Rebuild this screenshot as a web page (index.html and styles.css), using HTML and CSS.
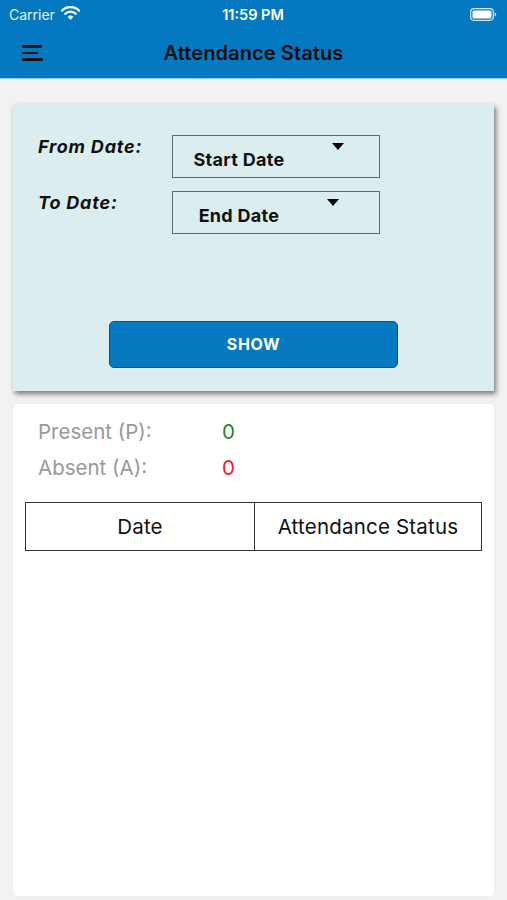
FILE: index.html
```html
<!DOCTYPE html>
<html lang="en">
<head>
    <meta charset="UTF-8">
    <meta name="viewport" content="width=device-width, initial-scale=1.0">
    <title>Attendance Status</title>
    <link rel="stylesheet" href="styles.css">
</head>
<body>
    <header class="top-bar">
        <div class="status-bar">
            <div class="carrier">
                Carrier
                <svg class="wifi" width="19" height="14" viewBox="0 0 19 14">
                    <path d="M1 4.6a12 12 0 0 1 17 0" fill="none" stroke="#fff" stroke-width="2.2" stroke-linecap="round"/>
                    <path d="M4.2 7.8a7.5 7.5 0 0 1 10.6 0" fill="none" stroke="#fff" stroke-width="2.2" stroke-linecap="round"/>
                    <path d="M7.2 10.9a3.2 3.2 0 0 1 4.6 0L9.5 13.3z" fill="#fff" stroke="#fff" stroke-width="1" stroke-linejoin="round"/>
                </svg>
            </div>
            <div class="clock">11:59 PM</div>
            <div class="battery">
                <svg width="27" height="13" viewBox="0 0 27 13">
                    <rect x="0.7" y="0.7" width="22.6" height="11.6" rx="3.2" fill="none" stroke="#cfe6f5" stroke-width="1.2"/>
                    <rect x="2.5" y="2.5" width="19" height="8" rx="1.6" fill="#fff"/>
                    <path d="M24.6 4.4c1.2.3 1.6 1 1.6 2.1s-.4 1.8-1.6 2.1z" fill="#cfe6f5"/>
                </svg>
            </div>
        </div>
        <nav class="nav-bar">
            <div class="menu-btn">
                <span></span><span></span><span></span>
            </div>
            <h1 class="nav-title">Attendance Status</h1>
            <div></div>
        </nav>
    </header>

    <main class="page">
        <section class="filter-card">
            <div class="filter-row">
                <label class="filter-label">From Date:</label>
                <div class="date-select">
                    <span class="date-text">Start Date</span>
                </div>
            </div>
            <div class="filter-row">
                <label class="filter-label">To Date:</label>
                <div class="date-select date-select-end">
                    <span class="date-text">End Date</span>
                </div>
            </div>
            <button class="show-btn">SHOW</button>
        </section>

        <section class="result-card">
            <div class="count-row">
                <span class="count-label">Present (P):</span>
                <span class="count-value present">0</span>
            </div>
            <div class="count-row">
                <span class="count-label">Absent (A):</span>
                <span class="count-value absent">0</span>
            </div>
            <table class="att-table">
                <tr>
                    <th>Date</th>
                    <th>Attendance Status</th>
                </tr>
            </table>
        </section>
    </main>
</body>
</html>
```

FILE: styles.css
```css
body{
    margin: 0;
    background-color: #f2f2f2;
    font-family: Inter, "Liberation Sans", sans-serif;
}
.top-bar{
    background-color: #0479c1;
    border-bottom: 1px solid #8fcdee;
}
.status-bar{
    height: 28px;
    display: grid;
    grid-template-columns: 1fr auto 1fr;
    align-items: center;
    padding: 0 10px 0 9px;
    color: #ffffff;
    font-size: 14px;
}
.carrier{
    display: flex;
    align-items: center;
    gap: 6px;
    color: #e4f1fa;
}
.wifi{
    margin-top: -2px;
}
.clock{
    font-weight: 600;
    font-size: 14.5px;
}
.battery{
    display: flex;
    justify-content: flex-end;
}
.nav-bar{
    height: 50px;
    display: grid;
    grid-template-columns: 1fr auto 1fr;
    align-items: center;
}
.menu-btn{
    display: flex;
    flex-direction: column;
    gap: 4px;
    padding-left: 22px;
}
.menu-btn span{
    display: block;
    height: 2.5px;
    background-color: #111;
    border-radius: 1px;
}
.menu-btn span:nth-child(1){ width: 20px; }
.menu-btn span:nth-child(2){ width: 16px; }
.menu-btn span:nth-child(3){ width: 21px; }
.nav-title{
    margin: 0;
    font-size: 20px;
    font-weight: 600;
    letter-spacing: 0.1px;
    color: #0d0d0d;
}
.page{
    padding: 25px 13px 4px;
}
/*top card with the date pickers*/
.filter-card{
    height: 287px;
    box-sizing: border-box;
    background-color: #dbedee;
    box-shadow: 2px 3px 5px rgba(0, 0, 0, 0.5);
    padding: 31px 0 0 25px;
    display: flex;
    flex-direction: column;
    gap: 13px;
}
.filter-row{
    display: flex;
    align-items: flex-start;
}
.filter-label{
    width: 134px;
    margin-top: 1px;
    font-size: 18px;
    font-weight: 700;
    font-style: italic;
    letter-spacing: 0.8px;
    color: #111;
}
.date-select{
    position: relative;
    width: 208px;
    height: 43px;
    box-sizing: border-box;
    border: 1.5px solid #5d6b6e;
    display: flex;
    align-items: center;
}
.date-select::after{
    content: '';
    position: absolute;
    top: 7px;
    right: 35px;
    width: 0;
    height: 0;
    border: 6.5px solid transparent;
    border-bottom: 0;
    border-top: 7px solid #000;
}
.date-select-end::after{
    right: 40px;
}
.date-text{
    width: 94px;
    margin: 5px 0 0 19px;
    text-align: center;
    font-size: 18px;
    font-weight: 700;
    letter-spacing: 0.3px;
    color: #111;
}
.show-btn{
    align-self: center;
    margin: 74px 0 0 -25px;
    width: 289px;
    height: 47px;
    background-color: #0679c1;
    border: 1.2px solid #1f4e6b;
    border-radius: 5px;
    color: #ffffff;
    font-family: inherit;
    font-size: 16px;
    font-weight: 700;
    letter-spacing: 0.6px;
    padding-bottom: 2px;
}
/*results card*/
.result-card{
    margin-top: 13px;
    height: 492px;
    box-sizing: border-box;
    background-color: #ffffff;
    border-radius: 4px;
    box-shadow: 0 0 2px rgba(0, 0, 0, 0.08);
    padding: 9px 12px 0;
}
.count-row{
    display: flex;
    align-items: center;
    height: 36px;
    padding-left: 13px;
    font-size: 20.5px;
}
.count-label{
    width: 184px;
    color: #999999;
}
.present{
    color: #1f8a1f;
}
.absent{
    color: #ea2323;
}
.att-table{
    margin-top: 17px;
    width: 457px;
    border-collapse: collapse;
}
.att-table th{
    height: 48px;
    box-sizing: border-box;
    border: 1.5px solid #333;
    font-size: 20.5px;
    font-weight: 400;
    letter-spacing: 0.2px;
    color: #111;
    padding: 0;
}
.att-table th:first-child{
    width: 229px;
}
```
